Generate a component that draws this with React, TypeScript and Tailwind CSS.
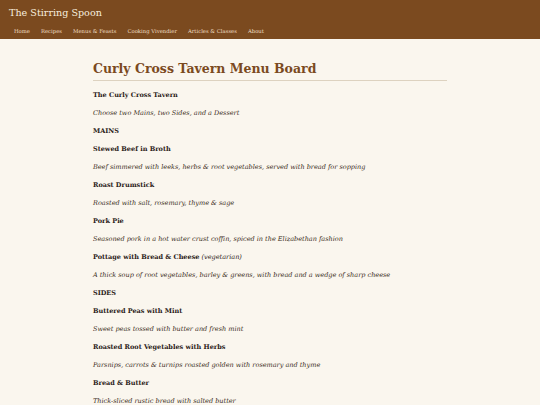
const nav = ["Home", "Recipes", "Menus & Feasts", "Cooking Vivendier", "Articles & Classes", "About"];

type Line = { text: string; kind: "b" | "i"; note?: string };

const lines: Line[] = [
  { text: "The Curly Cross Tavern", kind: "b" },
  { text: "Choose two Mains, two Sides, and a Dessert", kind: "i" },
  { text: "MAINS", kind: "b" },
  { text: "Stewed Beef in Broth", kind: "b" },
  { text: "Beef simmered with leeks, herbs & root vegetables, served with bread for sopping", kind: "i" },
  { text: "Roast Drumstick", kind: "b" },
  { text: "Roasted with salt, rosemary, thyme & sage", kind: "i" },
  { text: "Pork Pie", kind: "b" },
  { text: "Seasoned pork in a hot water crust coffin, spiced in the Elizabethan fashion", kind: "i" },
  { text: "Pottage with Bread & Cheese", kind: "b", note: "(vegetarian)" },
  { text: "A thick soup of root vegetables, barley & greens, with bread and a wedge of sharp cheese", kind: "i" },
  { text: "SIDES", kind: "b" },
  { text: "Buttered Peas with Mint", kind: "b" },
  { text: "Sweet peas tossed with butter and fresh mint", kind: "i" },
  { text: "Roasted Root Vegetables with Herbs", kind: "b" },
  { text: "Parsnips, carrots & turnips roasted golden with rosemary and thyme", kind: "i" },
  { text: "Bread & Butter", kind: "b" },
  { text: "Thick-sliced rustic bread with salted butter", kind: "i" },
];

export default function App() {
  return (
    <div className="min-h-screen bg-[#faf6ee] text-[#2b2118] font-['DejaVu_Serif',Georgia,serif]">
      <header className="bg-[#7b4a1f] px-[9px] pt-[6px] pb-[3px]">
        <div className="text-[9.6px] leading-[14px] text-[#f7eedf]">The Stirring Spoon</div>
        <nav className="mt-[6px] flex gap-[11px] pl-[5px] text-[5.3px] leading-[10px] text-[#f0dfc4]">
          {nav.map((n) => (
            <a key={n} href="#">
              {n}
            </a>
          ))}
        </nav>
      </header>

      <main className="mx-auto w-[354px] pt-[21px]">
        <h1 className="border-b border-[#ddd2c0] pb-[2px] text-[12.5px] font-bold leading-[18px] text-[#7b4a1f]">
          Curly Cross Tavern Menu Board
        </h1>
        <div className="pt-[5px] text-[6.5px]">
          {lines.map((l, i) => (
            <p
              key={i}
              className={l.kind === "b" ? "font-bold leading-[18px]" : "italic leading-[18px] text-[#3a2d22]"}
            >
              {l.text}
              {l.note ? <span className="font-normal italic"> {l.note}</span> : null}
            </p>
          ))}
        </div>
      </main>
    </div>
  );
}
